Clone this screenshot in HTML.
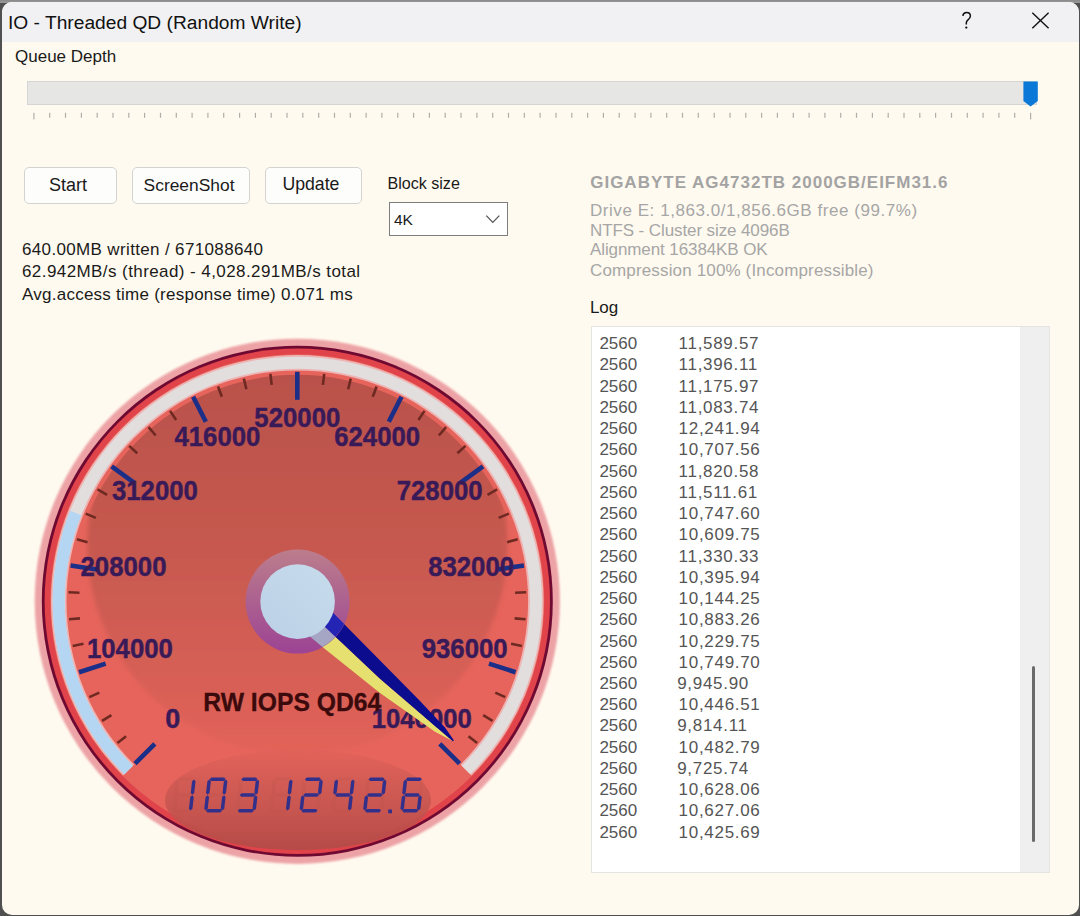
<!DOCTYPE html>
<html><head><meta charset="utf-8">
<style>
*{margin:0;padding:0;box-sizing:border-box}
html,body{width:1080px;height:916px;overflow:hidden;background:#505050}
body{position:relative;font-family:"Liberation Sans",sans-serif;color:#1a1a1a}
.t{position:absolute;white-space:pre;line-height:1}
#top{position:absolute;left:0;top:0;width:1080px;height:3px;background:linear-gradient(#8a8a8a,#9a9a9a)}
#win{position:absolute;left:2px;top:2px;width:1077px;height:913px;background:#fffaef;border-radius:10px;overflow:hidden}
#title{position:absolute;left:0;top:0;width:100%;height:40px;background:#f1f1f3}
.btn{position:absolute;border:1px solid #d3d3d0;border-radius:5px;background:#fdfdfc}
.gray{color:#a6a6a6}
.log{color:#555}
</style></head><body>
<div id="top"></div>
<div id="win">
  <div id="title"></div>
</div>
<div class="t" id="ttl" style="left:8px;top:13.3px;font-size:19.2px;color:#111">IO - Threaded QD (Random Write)</div>
<svg style="position:absolute;left:0;top:0" width="1080" height="916">
  <path d="M962.8 15.8 C963.2 13.6 964.7 12.5 966.6 12.5 C968.8 12.5 970.4 14 970.4 16.1 C970.4 18.2 969.1 19.2 967.8 20.2 C966.7 21.1 966.3 21.8 966.3 23.1 V24.6" fill="none" stroke="#111" stroke-width="1.5"/><circle cx="966.3" cy="27.6" r="1.15" fill="#111"/>
  <path d="M1032.3 12.8 L1048.6 28.2 M1048.6 12.8 L1032.3 28.2" stroke="#111" stroke-width="1.4"/>
  <rect x="27.5" y="81.5" width="1009" height="23" fill="#e6e7e4" stroke="#d5d6d3" stroke-width="1"/>
  <path d="M1023.4 81.6 H1037.8 V101 L1030.6 106.6 L1023.4 101 Z" fill="#0a78d6"/>
  <rect x="33.3" y="112.8" width="1.2" height="6.6" fill="#aeaeaa"/>
<rect x="49.1" y="112.8" width="1.2" height="5" fill="#aeaeaa"/>
<rect x="64.9" y="112.8" width="1.2" height="5" fill="#aeaeaa"/>
<rect x="80.8" y="112.8" width="1.2" height="5" fill="#aeaeaa"/>
<rect x="96.6" y="112.8" width="1.2" height="5" fill="#aeaeaa"/>
<rect x="112.4" y="112.8" width="1.2" height="5" fill="#aeaeaa"/>
<rect x="128.2" y="112.8" width="1.2" height="5" fill="#aeaeaa"/>
<rect x="144.0" y="112.8" width="1.2" height="5" fill="#aeaeaa"/>
<rect x="159.9" y="112.8" width="1.2" height="5" fill="#aeaeaa"/>
<rect x="175.7" y="112.8" width="1.2" height="5" fill="#aeaeaa"/>
<rect x="191.5" y="112.8" width="1.2" height="5" fill="#aeaeaa"/>
<rect x="207.3" y="112.8" width="1.2" height="5" fill="#aeaeaa"/>
<rect x="223.1" y="112.8" width="1.2" height="5" fill="#aeaeaa"/>
<rect x="239.0" y="112.8" width="1.2" height="5" fill="#aeaeaa"/>
<rect x="254.8" y="112.8" width="1.2" height="5" fill="#aeaeaa"/>
<rect x="270.6" y="112.8" width="1.2" height="5" fill="#aeaeaa"/>
<rect x="286.4" y="112.8" width="1.2" height="5" fill="#aeaeaa"/>
<rect x="302.2" y="112.8" width="1.2" height="5" fill="#aeaeaa"/>
<rect x="318.1" y="112.8" width="1.2" height="5" fill="#aeaeaa"/>
<rect x="333.9" y="112.8" width="1.2" height="5" fill="#aeaeaa"/>
<rect x="349.7" y="112.8" width="1.2" height="5" fill="#aeaeaa"/>
<rect x="365.5" y="112.8" width="1.2" height="5" fill="#aeaeaa"/>
<rect x="381.3" y="112.8" width="1.2" height="5" fill="#aeaeaa"/>
<rect x="397.2" y="112.8" width="1.2" height="5" fill="#aeaeaa"/>
<rect x="413.0" y="112.8" width="1.2" height="5" fill="#aeaeaa"/>
<rect x="428.8" y="112.8" width="1.2" height="5" fill="#aeaeaa"/>
<rect x="444.6" y="112.8" width="1.2" height="5" fill="#aeaeaa"/>
<rect x="460.4" y="112.8" width="1.2" height="5" fill="#aeaeaa"/>
<rect x="476.3" y="112.8" width="1.2" height="5" fill="#aeaeaa"/>
<rect x="492.1" y="112.8" width="1.2" height="5" fill="#aeaeaa"/>
<rect x="507.9" y="112.8" width="1.2" height="5" fill="#aeaeaa"/>
<rect x="523.7" y="112.8" width="1.2" height="5" fill="#aeaeaa"/>
<rect x="539.5" y="112.8" width="1.2" height="5" fill="#aeaeaa"/>
<rect x="555.4" y="112.8" width="1.2" height="5" fill="#aeaeaa"/>
<rect x="571.2" y="112.8" width="1.2" height="5" fill="#aeaeaa"/>
<rect x="587.0" y="112.8" width="1.2" height="5" fill="#aeaeaa"/>
<rect x="602.8" y="112.8" width="1.2" height="5" fill="#aeaeaa"/>
<rect x="618.6" y="112.8" width="1.2" height="5" fill="#aeaeaa"/>
<rect x="634.5" y="112.8" width="1.2" height="5" fill="#aeaeaa"/>
<rect x="650.3" y="112.8" width="1.2" height="5" fill="#aeaeaa"/>
<rect x="666.1" y="112.8" width="1.2" height="5" fill="#aeaeaa"/>
<rect x="681.9" y="112.8" width="1.2" height="5" fill="#aeaeaa"/>
<rect x="697.7" y="112.8" width="1.2" height="5" fill="#aeaeaa"/>
<rect x="713.6" y="112.8" width="1.2" height="5" fill="#aeaeaa"/>
<rect x="729.4" y="112.8" width="1.2" height="5" fill="#aeaeaa"/>
<rect x="745.2" y="112.8" width="1.2" height="5" fill="#aeaeaa"/>
<rect x="761.0" y="112.8" width="1.2" height="5" fill="#aeaeaa"/>
<rect x="776.8" y="112.8" width="1.2" height="5" fill="#aeaeaa"/>
<rect x="792.7" y="112.8" width="1.2" height="5" fill="#aeaeaa"/>
<rect x="808.5" y="112.8" width="1.2" height="5" fill="#aeaeaa"/>
<rect x="824.3" y="112.8" width="1.2" height="5" fill="#aeaeaa"/>
<rect x="840.1" y="112.8" width="1.2" height="5" fill="#aeaeaa"/>
<rect x="855.9" y="112.8" width="1.2" height="5" fill="#aeaeaa"/>
<rect x="871.8" y="112.8" width="1.2" height="5" fill="#aeaeaa"/>
<rect x="887.6" y="112.8" width="1.2" height="5" fill="#aeaeaa"/>
<rect x="903.4" y="112.8" width="1.2" height="5" fill="#aeaeaa"/>
<rect x="919.2" y="112.8" width="1.2" height="5" fill="#aeaeaa"/>
<rect x="935.0" y="112.8" width="1.2" height="5" fill="#aeaeaa"/>
<rect x="950.9" y="112.8" width="1.2" height="5" fill="#aeaeaa"/>
<rect x="966.7" y="112.8" width="1.2" height="5" fill="#aeaeaa"/>
<rect x="982.5" y="112.8" width="1.2" height="5" fill="#aeaeaa"/>
<rect x="998.3" y="112.8" width="1.2" height="5" fill="#aeaeaa"/>
<rect x="1014.1" y="112.8" width="1.2" height="5" fill="#aeaeaa"/>
<rect x="1030.0" y="112.8" width="1.2" height="6.6" fill="#aeaeaa"/>
</svg>
<div class="t" id="qd" style="left:15px;top:47.6px;font-size:17px">Queue Depth</div>

<div class="btn" id="b1" style="left:24px;top:167px;width:93px;height:37px"></div>
<div class="btn" id="b2" style="left:132px;top:167px;width:118px;height:37px"></div>
<div class="btn" id="b3" style="left:265px;top:167px;width:97px;height:37px"></div>
<div class="t" id="tb1" style="left:49px;top:176.2px;font-size:18px">Start</div>
<div class="t" id="tb2" style="left:143.6px;top:176.7px;font-size:17.4px">ScreenShot</div>
<div class="t" id="tb3" style="left:282.4px;top:176.4px;font-size:17.7px">Update</div>
<div class="t" id="bs" style="left:387.4px;top:175.3px;font-size:16.1px">Block size</div>
<div style="position:absolute;left:388.5px;top:202px;width:119px;height:34px;border:1px solid #7d7d7d;background:#fff"></div>
<div class="t" id="k4" style="left:393.9px;top:211.6px;font-size:15.5px">4K</div>
<svg style="position:absolute;left:0;top:0" width="1080" height="916">
  <path d="M486.3 215.6 L492.8 222.4 L499.3 215.6" fill="none" stroke="#555" stroke-width="1.3"/>
</svg>
<div class="t" id="l1" style="left:22px;top:241px;font-size:17px;letter-spacing:0.35px">640.00MB written / 671088640</div>
<div class="t" id="l2" style="left:22px;top:262.6px;font-size:17px;letter-spacing:0.42px">62.942MB/s (thread) - 4,028.291MB/s total</div>
<div class="t" id="l3" style="left:22px;top:286px;font-size:17px;letter-spacing:0.25px">Avg.access time (response time) 0.071 ms</div>

<div class="t gray" id="r0" style="left:590.2px;top:174.3px;font-size:17px;font-weight:bold;letter-spacing:1px;color:#a3a3a3">GIGABYTE AG4732TB 2000GB/EIFM31.6</div>
<div class="t gray" id="r1" style="left:590px;top:201.5px;font-size:17px;letter-spacing:0.55px">Drive E: 1,863.0/1,856.6GB free (99.7%)</div>
<div class="t gray" id="r2" style="left:590px;top:221.9px;font-size:17px;letter-spacing:-0.1px">NTFS - Cluster size 4096B</div>
<div class="t gray" id="r3" style="left:590px;top:241px;font-size:17px;letter-spacing:-0.1px">Alignment 16384KB OK</div>
<div class="t gray" id="r4" style="left:590px;top:261.7px;font-size:17px;letter-spacing:0.15px">Compression 100% (Incompressible)</div>
<div class="t" id="log" style="left:589.9px;top:298.6px;font-size:17px">Log</div>
<div style="position:absolute;left:590.5px;top:326px;width:459px;height:547px;border:1px solid #e4e4e2;background:#fff"></div>
<div style="position:absolute;left:1020px;top:327px;width:28.5px;height:545px;background:#efefef"></div>
<div style="position:absolute;left:1031.5px;top:666px;width:3px;height:176px;border-radius:1.5px;background:#6a6a6a"></div>
<div class="t log" style="left:599.4px;top:335.1px;font-size:17px">2560</div><div class="t log" style="left:678.6px;top:335.1px;font-size:17px;letter-spacing:0.7px">11,589.57</div>
<div class="t log" style="left:599.4px;top:356.3px;font-size:17px">2560</div><div class="t log" style="left:678.6px;top:356.3px;font-size:17px;letter-spacing:0.7px">11,396.11</div>
<div class="t log" style="left:599.4px;top:377.6px;font-size:17px">2560</div><div class="t log" style="left:678.6px;top:377.6px;font-size:17px;letter-spacing:0.7px">11,175.97</div>
<div class="t log" style="left:599.4px;top:398.8px;font-size:17px">2560</div><div class="t log" style="left:678.6px;top:398.8px;font-size:17px;letter-spacing:0.7px">11,083.74</div>
<div class="t log" style="left:599.4px;top:420.1px;font-size:17px">2560</div><div class="t log" style="left:678.6px;top:420.1px;font-size:17px;letter-spacing:0.7px">12,241.94</div>
<div class="t log" style="left:599.4px;top:441.3px;font-size:17px">2560</div><div class="t log" style="left:678.6px;top:441.3px;font-size:17px;letter-spacing:0.7px">10,707.56</div>
<div class="t log" style="left:599.4px;top:462.5px;font-size:17px">2560</div><div class="t log" style="left:678.6px;top:462.5px;font-size:17px;letter-spacing:0.7px">11,820.58</div>
<div class="t log" style="left:599.4px;top:483.8px;font-size:17px">2560</div><div class="t log" style="left:678.6px;top:483.8px;font-size:17px;letter-spacing:0.7px">11,511.61</div>
<div class="t log" style="left:599.4px;top:505.0px;font-size:17px">2560</div><div class="t log" style="left:678.6px;top:505.0px;font-size:17px;letter-spacing:0.7px">10,747.60</div>
<div class="t log" style="left:599.4px;top:526.3px;font-size:17px">2560</div><div class="t log" style="left:678.6px;top:526.3px;font-size:17px;letter-spacing:0.7px">10,609.75</div>
<div class="t log" style="left:599.4px;top:547.5px;font-size:17px">2560</div><div class="t log" style="left:678.6px;top:547.5px;font-size:17px;letter-spacing:0.7px">11,330.33</div>
<div class="t log" style="left:599.4px;top:568.7px;font-size:17px">2560</div><div class="t log" style="left:678.6px;top:568.7px;font-size:17px;letter-spacing:0.7px">10,395.94</div>
<div class="t log" style="left:599.4px;top:590.0px;font-size:17px">2560</div><div class="t log" style="left:678.6px;top:590.0px;font-size:17px;letter-spacing:0.7px">10,144.25</div>
<div class="t log" style="left:599.4px;top:611.2px;font-size:17px">2560</div><div class="t log" style="left:678.6px;top:611.2px;font-size:17px;letter-spacing:0.7px">10,883.26</div>
<div class="t log" style="left:599.4px;top:632.5px;font-size:17px">2560</div><div class="t log" style="left:678.6px;top:632.5px;font-size:17px;letter-spacing:0.7px">10,229.75</div>
<div class="t log" style="left:599.4px;top:653.7px;font-size:17px">2560</div><div class="t log" style="left:678.6px;top:653.7px;font-size:17px;letter-spacing:0.7px">10,749.70</div>
<div class="t log" style="left:599.4px;top:674.9px;font-size:17px">2560</div><div class="t log" style="left:677.2px;top:674.9px;font-size:17px;letter-spacing:0.7px">9,945.90</div>
<div class="t log" style="left:599.4px;top:696.2px;font-size:17px">2560</div><div class="t log" style="left:678.6px;top:696.2px;font-size:17px;letter-spacing:0.7px">10,446.51</div>
<div class="t log" style="left:599.4px;top:717.4px;font-size:17px">2560</div><div class="t log" style="left:677.2px;top:717.4px;font-size:17px;letter-spacing:0.7px">9,814.11</div>
<div class="t log" style="left:599.4px;top:738.7px;font-size:17px">2560</div><div class="t log" style="left:678.6px;top:738.7px;font-size:17px;letter-spacing:0.7px">10,482.79</div>
<div class="t log" style="left:599.4px;top:759.9px;font-size:17px">2560</div><div class="t log" style="left:677.2px;top:759.9px;font-size:17px;letter-spacing:0.7px">9,725.74</div>
<div class="t log" style="left:599.4px;top:781.1px;font-size:17px">2560</div><div class="t log" style="left:678.6px;top:781.1px;font-size:17px;letter-spacing:0.7px">10,628.06</div>
<div class="t log" style="left:599.4px;top:802.4px;font-size:17px">2560</div><div class="t log" style="left:678.6px;top:802.4px;font-size:17px;letter-spacing:0.7px">10,627.06</div>
<div class="t log" style="left:599.4px;top:823.6px;font-size:17px">2560</div><div class="t log" style="left:678.6px;top:823.6px;font-size:17px;letter-spacing:0.7px">10,425.69</div>
<!--GAUGE-->
<svg id="gauge" style="position:absolute;left:0;top:0" width="1080" height="916">
<defs>
<radialGradient id="gDark" cx="297.3" cy="529" r="216" gradientUnits="userSpaceOnUse">
 <stop offset="0" stop-color="#c85b52"/>
 <stop offset="0.6" stop-color="#c2574f"/>
 <stop offset="0.96" stop-color="#c95c53"/>
 <stop offset="1" stop-color="#c95c53" stop-opacity="0"/>
</radialGradient>
<linearGradient id="gDarkV" x1="0" y1="370" x2="0" y2="755" gradientUnits="userSpaceOnUse">
 <stop offset="0" stop-color="#b9514c"/>
 <stop offset="0.45" stop-color="#c6594f"/>
 <stop offset="0.75" stop-color="#d45e55"/>
 <stop offset="1" stop-color="#e3635a"/>
</linearGradient>
<filter id="soft" x="-10%" y="-10%" width="120%" height="120%"><feGaussianBlur stdDeviation="2"/></filter>
<filter id="soft1" x="-5%" y="-5%" width="110%" height="110%"><feGaussianBlur stdDeviation="0.9"/></filter>
<clipPath id="faceClip"><circle cx="297.3" cy="601.3" r="226.5"/></clipPath>
<linearGradient id="gRing" x1="0" y1="549" x2="0" y2="654" gradientUnits="userSpaceOnUse">
 <stop offset="0" stop-color="#b88aa0"/>
 <stop offset="1" stop-color="#8a3aa8"/>
</linearGradient>
<linearGradient id="gHub" x1="334" y1="564" x2="260" y2="639" gradientUnits="userSpaceOnUse">
 <stop offset="0" stop-color="#c6dcec"/>
 <stop offset="1" stop-color="#bcd0e6"/>
</linearGradient>
<linearGradient id="gLcd" x1="0" y1="750" x2="0" y2="850" gradientUnits="userSpaceOnUse">
 <stop offset="0" stop-color="#d05a54" stop-opacity="0.15"/>
 <stop offset="0.35" stop-color="#cc5953" stop-opacity="0.8"/>
 <stop offset="1" stop-color="#b54a47" stop-opacity="1"/>
</linearGradient>
</defs>
<circle cx="297.3" cy="601.3" r="262.6" fill="#eda3a6" filter="url(#soft1)"/>
<circle cx="297.3" cy="601.3" r="255.5" fill="#6e0a32"/>
<circle cx="297.3" cy="601.3" r="252.7" fill="#e0434a"/>
<circle cx="297.3" cy="601.3" r="247" fill="#e6645b"/>
<g clip-path="url(#faceClip)"><circle cx="297.3" cy="545" r="210" fill="url(#gDarkV)" filter="url(#soft)"/></g>
<path d="M123.14 775.46 A246.3 246.3 0 1 1 471.46 775.46 L460.50 764.50 A230.8 230.8 0 1 0 134.10 764.50 Z" fill="#eeb4b4" />
<path d="M124.34 774.26 A244.6 244.6 0 1 1 470.26 774.26 L461.77 765.77 A232.6 232.6 0 1 0 132.83 765.77 Z" fill="#e2dede" />
<path d="M124.34 774.26 A244.6 244.6 0 0 1 70.03 510.86 L81.18 515.30 A232.6 232.6 0 0 0 132.83 765.77 Z" fill="#b4d6f2" />
<line x1="135.02" y1="763.58" x2="154.82" y2="743.78" stroke="#1b2f88" stroke-width="4.6"/>
<line x1="117.46" y1="743.07" x2="126.10" y2="736.26" stroke="#6e2a22" stroke-width="2.6"/>
<line x1="102.05" y1="720.95" x2="111.42" y2="715.20" stroke="#6e2a22" stroke-width="2.6"/>
<line x1="89.34" y1="697.17" x2="99.32" y2="692.57" stroke="#6e2a22" stroke-width="2.6"/>
<line x1="79.03" y1="672.22" x2="105.66" y2="663.57" stroke="#1b2f88" stroke-width="4.6"/>
<line x1="72.70" y1="645.98" x2="83.49" y2="643.83" stroke="#6e2a22" stroke-width="2.6"/>
<line x1="69.01" y1="619.27" x2="79.97" y2="618.40" stroke="#6e2a22" stroke-width="2.6"/>
<line x1="68.48" y1="592.31" x2="79.47" y2="592.74" stroke="#6e2a22" stroke-width="2.6"/>
<line x1="70.63" y1="565.40" x2="98.28" y2="569.78" stroke="#1b2f88" stroke-width="4.6"/>
<line x1="76.90" y1="539.14" x2="87.48" y2="542.13" stroke="#6e2a22" stroke-width="2.6"/>
<line x1="85.73" y1="513.67" x2="95.89" y2="517.88" stroke="#6e2a22" stroke-width="2.6"/>
<line x1="97.50" y1="489.41" x2="107.10" y2="494.78" stroke="#6e2a22" stroke-width="2.6"/>
<line x1="111.63" y1="466.40" x2="134.28" y2="482.86" stroke="#1b2f88" stroke-width="4.6"/>
<line x1="129.14" y1="445.85" x2="137.22" y2="453.32" stroke="#6e2a22" stroke-width="2.6"/>
<line x1="148.58" y1="427.17" x2="155.72" y2="435.53" stroke="#6e2a22" stroke-width="2.6"/>
<line x1="170.07" y1="410.89" x2="176.19" y2="420.04" stroke="#6e2a22" stroke-width="2.6"/>
<line x1="193.11" y1="396.81" x2="205.82" y2="421.76" stroke="#1b2f88" stroke-width="4.6"/>
<line x1="218.04" y1="386.45" x2="221.85" y2="396.77" stroke="#6e2a22" stroke-width="2.6"/>
<line x1="243.84" y1="378.63" x2="246.41" y2="389.32" stroke="#6e2a22" stroke-width="2.6"/>
<line x1="270.38" y1="373.89" x2="271.68" y2="384.81" stroke="#6e2a22" stroke-width="2.6"/>
<line x1="297.30" y1="371.80" x2="297.30" y2="399.80" stroke="#1b2f88" stroke-width="4.6"/>
<line x1="324.22" y1="373.89" x2="322.92" y2="384.81" stroke="#6e2a22" stroke-width="2.6"/>
<line x1="350.76" y1="378.63" x2="348.19" y2="389.32" stroke="#6e2a22" stroke-width="2.6"/>
<line x1="376.56" y1="386.45" x2="372.75" y2="396.77" stroke="#6e2a22" stroke-width="2.6"/>
<line x1="401.49" y1="396.81" x2="388.78" y2="421.76" stroke="#1b2f88" stroke-width="4.6"/>
<line x1="424.53" y1="410.89" x2="418.41" y2="420.04" stroke="#6e2a22" stroke-width="2.6"/>
<line x1="446.02" y1="427.17" x2="438.88" y2="435.53" stroke="#6e2a22" stroke-width="2.6"/>
<line x1="465.46" y1="445.85" x2="457.38" y2="453.32" stroke="#6e2a22" stroke-width="2.6"/>
<line x1="482.97" y1="466.40" x2="460.32" y2="482.86" stroke="#1b2f88" stroke-width="4.6"/>
<line x1="497.10" y1="489.41" x2="487.50" y2="494.78" stroke="#6e2a22" stroke-width="2.6"/>
<line x1="508.87" y1="513.67" x2="498.71" y2="517.88" stroke="#6e2a22" stroke-width="2.6"/>
<line x1="517.70" y1="539.14" x2="507.12" y2="542.13" stroke="#6e2a22" stroke-width="2.6"/>
<line x1="523.97" y1="565.40" x2="496.32" y2="569.78" stroke="#1b2f88" stroke-width="4.6"/>
<line x1="526.12" y1="592.31" x2="515.13" y2="592.74" stroke="#6e2a22" stroke-width="2.6"/>
<line x1="525.59" y1="619.27" x2="514.63" y2="618.40" stroke="#6e2a22" stroke-width="2.6"/>
<line x1="521.90" y1="645.98" x2="511.11" y2="643.83" stroke="#6e2a22" stroke-width="2.6"/>
<line x1="515.57" y1="672.22" x2="488.94" y2="663.57" stroke="#1b2f88" stroke-width="4.6"/>
<line x1="505.26" y1="697.17" x2="495.28" y2="692.57" stroke="#6e2a22" stroke-width="2.6"/>
<line x1="492.55" y1="720.95" x2="483.18" y2="715.20" stroke="#6e2a22" stroke-width="2.6"/>
<line x1="477.14" y1="743.07" x2="468.50" y2="736.26" stroke="#6e2a22" stroke-width="2.6"/>
<line x1="459.58" y1="763.58" x2="439.78" y2="743.78" stroke="#1b2f88" stroke-width="4.6"/>
<text x="172.85" y="727.65" text-anchor="middle" font-family="Liberation Sans" font-weight="bold" font-size="28.5" fill="#391a58" stroke="#391a58" stroke-width="0.45" textLength="15" lengthAdjust="spacingAndGlyphs">0</text>
<text x="129.91" y="657.59" text-anchor="middle" font-family="Liberation Sans" font-weight="bold" font-size="28.5" fill="#391a58" stroke="#391a58" stroke-width="0.45" textLength="86" lengthAdjust="spacingAndGlyphs">104000</text>
<text x="123.47" y="575.67" text-anchor="middle" font-family="Liberation Sans" font-weight="bold" font-size="28.5" fill="#391a58" stroke="#391a58" stroke-width="0.45" textLength="86" lengthAdjust="spacingAndGlyphs">208000</text>
<text x="154.91" y="499.75" text-anchor="middle" font-family="Liberation Sans" font-weight="bold" font-size="28.5" fill="#391a58" stroke="#391a58" stroke-width="0.45" textLength="86" lengthAdjust="spacingAndGlyphs">312000</text>
<text x="217.40" y="446.38" text-anchor="middle" font-family="Liberation Sans" font-weight="bold" font-size="28.5" fill="#391a58" stroke="#391a58" stroke-width="0.45" textLength="86" lengthAdjust="spacingAndGlyphs">416000</text>
<text x="297.30" y="427.20" text-anchor="middle" font-family="Liberation Sans" font-weight="bold" font-size="28.5" fill="#391a58" stroke="#391a58" stroke-width="0.45" textLength="86" lengthAdjust="spacingAndGlyphs">520000</text>
<text x="377.20" y="446.38" text-anchor="middle" font-family="Liberation Sans" font-weight="bold" font-size="28.5" fill="#391a58" stroke="#391a58" stroke-width="0.45" textLength="86" lengthAdjust="spacingAndGlyphs">624000</text>
<text x="439.69" y="499.75" text-anchor="middle" font-family="Liberation Sans" font-weight="bold" font-size="28.5" fill="#391a58" stroke="#391a58" stroke-width="0.45" textLength="86" lengthAdjust="spacingAndGlyphs">728000</text>
<text x="471.13" y="575.67" text-anchor="middle" font-family="Liberation Sans" font-weight="bold" font-size="28.5" fill="#391a58" stroke="#391a58" stroke-width="0.45" textLength="86" lengthAdjust="spacingAndGlyphs">832000</text>
<text x="464.69" y="657.59" text-anchor="middle" font-family="Liberation Sans" font-weight="bold" font-size="28.5" fill="#391a58" stroke="#391a58" stroke-width="0.45" textLength="86" lengthAdjust="spacingAndGlyphs">936000</text>
<text x="421.75" y="727.65" text-anchor="middle" font-family="Liberation Sans" font-weight="bold" font-size="28.5" fill="#391a58" stroke="#391a58" stroke-width="0.45" textLength="100" lengthAdjust="spacingAndGlyphs">1040000</text>
<text x="203.3" y="711.1" font-family="Liberation Sans" font-weight="bold" font-size="25.2" fill="#3a0a0c" stroke="#3a0a0c" stroke-width="0.3" textLength="178" lengthAdjust="spacingAndGlyphs">RW IOPS QD64</text>
<ellipse cx="298" cy="800" rx="133" ry="50" fill="url(#gLcd)"/>
<path d="M297.3 601.3 L326.7 628.5 L380 678.8 L452.5 741 L435 731.7 L380 693 L322.8 647.2 L300 628 Z" fill="#e6e070"/>
<path d="M297.3 601.3 L310 589.6 L420 701 L445 727.5 L454 740.5 L450.5 742 L452.5 741 L380 678.8 L326.7 628.5 Z" fill="#0c0c8e"/>
<circle cx="297.6" cy="601.6" r="52" fill="url(#gRing)" opacity="0.75"/>
<clipPath id="ringClip"><circle cx="297.6" cy="601.6" r="51.5"/></clipPath>
<g clip-path="url(#ringClip)"><path d="M297.3 601.3 L326.7 628.5 L380 678.8 L452.5 741 L435 731.7 L380 693 L322.8 647.2 L300 628 Z" fill="#a4a6c4"/><path d="M297.3 601.3 L310 589.6 L420 701 L445 727.5 L454 740.5 L450.5 742 L452.5 741 L380 678.8 L326.7 628.5 Z" fill="#2424b4"/></g>
<circle cx="297.6" cy="601.6" r="37.3" fill="url(#gHub)"/>
<polygon points="177.70,779.25 179.65,777.50 192.35,777.50 193.90,779.25 191.95,781.00 179.25,781.00" fill="#b0504c" opacity="0.15"/>
<polygon points="194.03,779.40 195.58,781.15 194.22,793.05 192.27,794.80 190.72,793.05 192.08,781.15" fill="#32308a"/>
<polygon points="192.23,795.20 193.78,796.95 192.42,808.85 190.47,810.60 188.92,808.85 190.28,796.95" fill="#32308a"/>
<polygon points="174.10,810.75 176.05,809.00 188.75,809.00 190.30,810.75 188.35,812.50 175.65,812.50" fill="#b0504c" opacity="0.15"/>
<polygon points="175.73,795.20 177.28,796.95 175.92,808.85 173.97,810.60 172.42,808.85 173.78,796.95" fill="#b0504c" opacity="0.15"/>
<polygon points="177.53,779.40 179.08,781.15 177.72,793.05 175.77,794.80 174.22,793.05 175.58,781.15" fill="#b0504c" opacity="0.15"/>
<polygon points="176.10,795.00 178.05,793.25 190.35,793.25 191.90,795.00 189.95,796.75 177.65,796.75" fill="#b0504c" opacity="0.15"/>
<polygon points="209.50,779.25 211.45,777.50 224.15,777.50 225.70,779.25 223.75,781.00 211.05,781.00" fill="#32308a"/>
<polygon points="225.83,779.40 227.38,781.15 226.02,793.05 224.07,794.80 222.52,793.05 223.88,781.15" fill="#32308a"/>
<polygon points="224.03,795.20 225.58,796.95 224.22,808.85 222.27,810.60 220.72,808.85 222.08,796.95" fill="#32308a"/>
<polygon points="205.90,810.75 207.85,809.00 220.55,809.00 222.10,810.75 220.15,812.50 207.45,812.50" fill="#32308a"/>
<polygon points="207.53,795.20 209.08,796.95 207.72,808.85 205.77,810.60 204.22,808.85 205.58,796.95" fill="#32308a"/>
<polygon points="209.33,779.40 210.88,781.15 209.52,793.05 207.57,794.80 206.02,793.05 207.38,781.15" fill="#32308a"/>
<polygon points="207.90,795.00 209.85,793.25 222.15,793.25 223.70,795.00 221.75,796.75 209.45,796.75" fill="#b0504c" opacity="0.15"/>
<polygon points="241.30,779.25 243.25,777.50 255.95,777.50 257.50,779.25 255.55,781.00 242.85,781.00" fill="#32308a"/>
<polygon points="257.63,779.40 259.18,781.15 257.82,793.05 255.87,794.80 254.32,793.05 255.68,781.15" fill="#32308a"/>
<polygon points="255.83,795.20 257.38,796.95 256.02,808.85 254.07,810.60 252.52,808.85 253.88,796.95" fill="#32308a"/>
<polygon points="237.70,810.75 239.65,809.00 252.35,809.00 253.90,810.75 251.95,812.50 239.25,812.50" fill="#32308a"/>
<polygon points="239.33,795.20 240.88,796.95 239.52,808.85 237.57,810.60 236.02,808.85 237.38,796.95" fill="#b0504c" opacity="0.15"/>
<polygon points="241.13,779.40 242.68,781.15 241.32,793.05 239.37,794.80 237.82,793.05 239.18,781.15" fill="#b0504c" opacity="0.15"/>
<polygon points="239.70,795.00 241.65,793.25 253.95,793.25 255.50,795.00 253.55,796.75 241.25,796.75" fill="#32308a"/>
<polygon points="274.70,779.25 276.65,777.50 289.35,777.50 290.90,779.25 288.95,781.00 276.25,781.00" fill="#b0504c" opacity="0.15"/>
<polygon points="291.03,779.40 292.58,781.15 291.22,793.05 289.27,794.80 287.72,793.05 289.08,781.15" fill="#32308a"/>
<polygon points="289.23,795.20 290.78,796.95 289.42,808.85 287.47,810.60 285.92,808.85 287.28,796.95" fill="#32308a"/>
<polygon points="271.10,810.75 273.05,809.00 285.75,809.00 287.30,810.75 285.35,812.50 272.65,812.50" fill="#b0504c" opacity="0.15"/>
<polygon points="272.73,795.20 274.28,796.95 272.92,808.85 270.97,810.60 269.42,808.85 270.78,796.95" fill="#b0504c" opacity="0.15"/>
<polygon points="274.53,779.40 276.08,781.15 274.72,793.05 272.77,794.80 271.22,793.05 272.58,781.15" fill="#b0504c" opacity="0.15"/>
<polygon points="273.10,795.00 275.05,793.25 287.35,793.25 288.90,795.00 286.95,796.75 274.65,796.75" fill="#b0504c" opacity="0.15"/>
<polygon points="304.90,779.25 306.85,777.50 319.55,777.50 321.10,779.25 319.15,781.00 306.45,781.00" fill="#32308a"/>
<polygon points="321.23,779.40 322.78,781.15 321.42,793.05 319.47,794.80 317.92,793.05 319.28,781.15" fill="#32308a"/>
<polygon points="319.43,795.20 320.98,796.95 319.62,808.85 317.67,810.60 316.12,808.85 317.48,796.95" fill="#b0504c" opacity="0.15"/>
<polygon points="301.30,810.75 303.25,809.00 315.95,809.00 317.50,810.75 315.55,812.50 302.85,812.50" fill="#32308a"/>
<polygon points="302.93,795.20 304.48,796.95 303.12,808.85 301.17,810.60 299.62,808.85 300.98,796.95" fill="#32308a"/>
<polygon points="304.73,779.40 306.28,781.15 304.92,793.05 302.97,794.80 301.42,793.05 302.78,781.15" fill="#b0504c" opacity="0.15"/>
<polygon points="303.30,795.00 305.25,793.25 317.55,793.25 319.10,795.00 317.15,796.75 304.85,796.75" fill="#32308a"/>
<polygon points="336.70,779.25 338.65,777.50 351.35,777.50 352.90,779.25 350.95,781.00 338.25,781.00" fill="#b0504c" opacity="0.15"/>
<polygon points="353.03,779.40 354.58,781.15 353.22,793.05 351.27,794.80 349.72,793.05 351.08,781.15" fill="#32308a"/>
<polygon points="351.23,795.20 352.78,796.95 351.42,808.85 349.47,810.60 347.92,808.85 349.28,796.95" fill="#32308a"/>
<polygon points="333.10,810.75 335.05,809.00 347.75,809.00 349.30,810.75 347.35,812.50 334.65,812.50" fill="#b0504c" opacity="0.15"/>
<polygon points="334.73,795.20 336.28,796.95 334.92,808.85 332.97,810.60 331.42,808.85 332.78,796.95" fill="#b0504c" opacity="0.15"/>
<polygon points="336.53,779.40 338.08,781.15 336.72,793.05 334.77,794.80 333.22,793.05 334.58,781.15" fill="#32308a"/>
<polygon points="335.10,795.00 337.05,793.25 349.35,793.25 350.90,795.00 348.95,796.75 336.65,796.75" fill="#32308a"/>
<polygon points="368.50,779.25 370.45,777.50 383.15,777.50 384.70,779.25 382.75,781.00 370.05,781.00" fill="#32308a"/>
<polygon points="384.83,779.40 386.38,781.15 385.02,793.05 383.07,794.80 381.52,793.05 382.88,781.15" fill="#32308a"/>
<polygon points="383.03,795.20 384.58,796.95 383.22,808.85 381.27,810.60 379.72,808.85 381.08,796.95" fill="#b0504c" opacity="0.15"/>
<polygon points="364.90,810.75 366.85,809.00 379.55,809.00 381.10,810.75 379.15,812.50 366.45,812.50" fill="#32308a"/>
<polygon points="366.53,795.20 368.08,796.95 366.72,808.85 364.77,810.60 363.22,808.85 364.58,796.95" fill="#32308a"/>
<polygon points="368.33,779.40 369.88,781.15 368.52,793.05 366.57,794.80 365.02,793.05 366.38,781.15" fill="#b0504c" opacity="0.15"/>
<polygon points="366.90,795.00 368.85,793.25 381.15,793.25 382.70,795.00 380.75,796.75 368.45,796.75" fill="#32308a"/>
<polygon points="405.70,779.25 407.65,777.50 420.35,777.50 421.90,779.25 419.95,781.00 407.25,781.00" fill="#32308a"/>
<polygon points="422.03,779.40 423.58,781.15 422.22,793.05 420.27,794.80 418.72,793.05 420.08,781.15" fill="#b0504c" opacity="0.15"/>
<polygon points="420.23,795.20 421.78,796.95 420.42,808.85 418.47,810.60 416.92,808.85 418.28,796.95" fill="#32308a"/>
<polygon points="402.10,810.75 404.05,809.00 416.75,809.00 418.30,810.75 416.35,812.50 403.65,812.50" fill="#32308a"/>
<polygon points="403.73,795.20 405.28,796.95 403.92,808.85 401.97,810.60 400.42,808.85 401.78,796.95" fill="#32308a"/>
<polygon points="405.53,779.40 407.08,781.15 405.72,793.05 403.77,794.80 402.22,793.05 403.58,781.15" fill="#32308a"/>
<polygon points="404.10,795.00 406.05,793.25 418.35,793.25 419.90,795.00 417.95,796.75 405.65,796.75" fill="#32308a"/>
<rect x="388.2" y="809.5" width="3.8" height="3.8" fill="#32308a"/>
</svg>
</body></html>
